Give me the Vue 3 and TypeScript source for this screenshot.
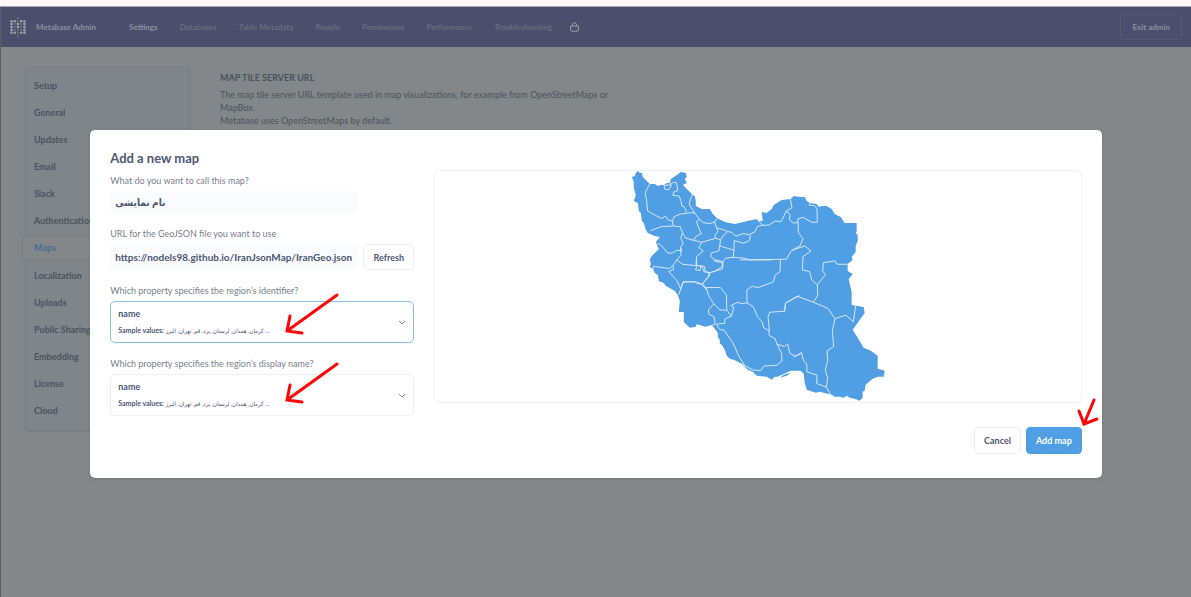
<script setup lang="ts">
import { ref } from 'vue'

const navItems: string[] = [
  'Settings', 'Databases', 'Table Metadata', 'People',
  'Permissions', 'Performance', 'Troubleshooting',
]

const sections: string[] = [
  'Setup', 'General', 'Updates', 'Email', 'Slack', 'Authentication', 'Maps',
  'Localization', 'Uploads', 'Public Sharing', 'Embedding', 'License', 'Cloud',
]

const mapName = ref('نام نمایشی')
const mapUrl = ref('https://nodels98.github.io/IranJsonMap/IranGeo.json')
const samples = 'کرمان, همدان, لرستان, یزد, قم, تهران, البرز ...'

// Logo: "1" is a bright dot, "0" a faint one, "." nothing
const logoRows: string[] = ['..0..', '11011', '10101', '10101', '10001', '11011', '..0..']
const logoDots = logoRows.flatMap((row, y) =>
  [...row].map((c, x) => ({ x: x * 10 + 4, y: y * 9 + 4, c })).filter((d) => d.c !== '.'),
)
</script>

<template>
  <div class="page">
    <div class="strip"></div>
    <header class="topbar">
      <svg class="logo" viewBox="0 0 48 62" aria-hidden="true">
        <circle v-for="(d, i) in logoDots" :key="i" :cx="d.x" :cy="d.y" r="4"
          :class="d.c === '1' ? 'dot-on' : 'dot-off'" />
      </svg>
      <strong class="brand">Metabase Admin</strong>
      <nav class="nav">
        <a v-for="(item, i) in navItems" :key="item" href="#" :class="{ current: i === 0 }">{{ item }}</a>
      </nav>
      <svg class="bag" viewBox="0 0 28 30" aria-hidden="true">
        <path d="M2 12H26V25Q26 28 23 28H5Q2 28 2 25ZM7 12V9Q8 2 14 2T21 9V12" />
      </svg>
      <button class="exit" type="button">Exit admin</button>
    </header>

    <div class="body">
      <aside class="sidebar">
        <a v-for="s in sections" :key="s" href="#" :class="{ active: s === 'Maps' }">{{ s }}</a>
      </aside>
      <main class="setting">
        <h1>MAP TILE SERVER URL</h1>
        <p>The map tile server URL template used in map visualizations, for example from OpenStreetMaps or MapBox.<br>Metabase uses OpenStreetMaps by default.</p>
      </main>
    </div>

    <div class="overlay">
      <section class="modal" role="dialog" aria-labelledby="modal-title">
        <div class="columns">
          <form class="form" @submit.prevent>
            <h2 id="modal-title">Add a new map</h2>
            <label for="map-name">What do you want to call this map?</label>
            <input id="map-name" v-model="mapName" class="text name" type="text">
            <label for="map-url">URL for the GeoJSON file you want to use</label>
            <div class="url-row">
              <input id="map-url" v-model="mapUrl" class="text" type="text">
              <button class="btn" type="button">Refresh</button>
            </div>
            <label for="region-key">Which property specifies the region’s identifier?</label>
            <div class="picker focused">
              <select id="region-key"><option>name</option></select>
              <span class="sample">Sample values: <span class="persian">{{ samples }}</span></span>
              <svg class="chevron" viewBox="0 0 8 5" aria-hidden="true"><path d="M1 1L4 4L7 1" /></svg>
              <svg class="arrow first" viewBox="0 0 56 42" aria-hidden="true"><path d="M53 2L3 38M6 23L3 38L18 40" /></svg>
            </div>
            <label for="region-name">Which property specifies the region’s display name?</label>
            <div class="picker">
              <select id="region-name"><option>name</option></select>
              <span class="sample">Sample values: <span class="persian">{{ samples }}</span></span>
              <svg class="chevron" viewBox="0 0 8 5" aria-hidden="true"><path d="M1 1L4 4L7 1" /></svg>
              <svg class="arrow second" viewBox="0 0 56 42" aria-hidden="true"><path d="M53 2L3 38M6 23L3 38L18 40" /></svg>
            </div>
          </form>

          <div class="preview">
            <svg class="map" viewBox="435 171 646 231" role="img" aria-label="Map preview">
              <path class="land" d="M632 177L635 176L636 173L638 171L640 173L642 173L643 177L647 181L650 184L655 184L658 186L661 185L664 185L667 183L670 183L671 179L677 175L681 172L686 173L687 177L685 179L687 183L683 185L686 188L689 191L693 195L695 196L696 201L696 206L702 209L710 209L713 214L717 218L725 222L735 224L748 221L757 219L759 221L763 221L762 212L767 213L772 209L774 205L782 200L791 199L794 196L800 197L805 197L807 201L810 203L817 204L819 207L822 206L827 206L832 209L835 214L841 217L845 223L857 223L857 231L856 233L858 235L858 241L856 246L856 252L852 257L853 260L848 264L848 271L853 274L849 279L852 292L852 305L864 307L865 313L853 330L858 338L864 348L871 351L878 356L878 369L885 371L884 377L878 377L873 379L866 385L865 391L863 392L863 398L860 401L855 399L850 398L847 396L844 398L840 397L835 397L832 395L820 392L816 393L807 390L805 383L804 374L801 371L791 371L782 375L778 377L775 377L772 380L767 377L757 376L753 372L748 370L742 364L734 360L730 359L727 356L725 350L722 345L720 344L720 340L718 337L718 333L712 325L705 327L700 325L696 324L695 321L698 320L696 327L690 328L684 322L684 312L679 312L680 301L678 295L675 291L670 288L666 286L664 283L659 281L658 275L655 273L653 269L650 267L651 264L650 259L652 256L655 253L659 249L656 242L660 237L655 236L648 233L646 230L644 223L642 221L641 213L639 211L638 203L634 201L636 195L634 188L634 182Z" />
              <path class="land" d="M780 378L784 375L791 373L787 376ZM784 375L789 372" />
              <g class="borders" transform="translate(620 160) scale(.333333)">
                <path d="M90 72L80 90L76 103L80 118L83 153L105 165L126 176L137 168L145 180L158 183L160 198L125 200L92 212M158 183L163 170L183 162L215 158L225 159M133 76L135 88L147 89L154 78L151 68M133 76L151 75L160 67L170 68L174 92L162 96L159 106L178 108L184 125L186 138L193 140L200 156M220 99L211 120L208 133L218 149L225 159L239 178M239 178L250 188L270 191L284 186L292 176M239 178L230 185L239 210L245 221L228 230L221 242M284 186L291 204L313 210L324 215L335 217L349 229L368 221L389 224L406 215L412 200L430 195M160 198L181 200L188 218L183 235L190 250L182 262L186 273L171 271L156 280L143 279L126 258L114 250M188 218L197 234L221 241L246 247L288 235L302 240L312 225L324 215M291 204L294 215L285 226L288 235M302 240L300 258L343 271L343 242L371 250L389 242L392 226M343 271L340 292L375 295L388 300L455 300M300 258L297 273L275 279L272 290L286 300L310 305L317 295L340 292M246 247L237 263L250 273L241 281L230 290L231 320L227 330L241 332L242 317L254 320L256 334L268 339L265 350L247 374L221 366L191 365L183 387M310 305L306 321L285 334L268 339M182 262L184 285L171 300L188 313L228 317M171 300L159 317L149 326L101 319L99 333M159 317L162 328L147 335L171 362L183 387M247 374L260 390" />
              </g>
              <g class="borders" transform="translate(740 180) scale(.333333)">
                <path d="M50 117L70 136L88 135L107 123L124 125L140 93L157 83L152 58M140 93L151 104L149 119L161 129L175 128L174 117L190 112L216 127L233 127L232 87L225 77L208 76L212 67M175 128L176 158L190 176L181 198L155 212L140 238L0 240M155 212L195 198L214 213L190 230L188 270L210 275L216 300L233 315L258 283L249 275L251 248L286 243L292 253L323 253M122 241L121 275L107 285L101 306L55 323L37 319L22 329" />
              </g>
              <g class="borders" transform="translate(670 260) scale(.333333)">
                <path d="M27 105L39 67L75 65L97 73L109 83L152 83L170 105L171 151L185 169L165 177L165 190L139 193M97 73L117 50L121 38L158 27L160 10L132 2M121 38L103 36L97 20L79 15L79 0M109 83L117 108L132 132L116 150L117 163L133 171L136 192L126 197M132 132L150 150L171 151M185 169L192 142L183 137L205 127L213 131L232 129L231 89M232 129L251 141L263 170L278 187L281 203L299 213L295 170L300 157L344 154L348 129L390 107M139 193L150 209L163 211L190 250L208 291L225 317L250 331L273 332L282 319L321 316L337 303L335 279L322 253L315 235L299 228L297 210M322 253L344 260L354 252L360 280L377 289L396 278M225 317L215 312" />
              </g>
              <g class="borders" transform="translate(770 280) scale(.333333)">
                <path d="M45 95L47 70L82 49L131 67L175 86L196 116L229 106L251 126L258 78M131 67L144 47L143 15M196 116L188 153L192 200L172 213L174 242L167 271L174 295L170 322L184 346M72 231L96 220L101 241L111 253L112 276L142 286L141 311L170 322" />
              </g>
            </svg>
          </div>
        </div>

        <footer class="actions">
          <button class="btn" type="button">Cancel</button>
          <button class="btn primary" type="button">Add map</button>
          <svg class="arrow third" viewBox="0 0 24 30" aria-hidden="true"><path d="M18 3L8 27M3 14L8 27L21 22" /></svg>
        </footer>
      </section>
    </div>
  </div>
</template>

<style>
body {
  background: #838789;
}
</style>

<style scoped>
.page {
  position: relative;
  box-sizing: border-box;
  min-height: 100vh;
  background: #838789;
  color: #4a525f;
  font-family: Lato, "DejaVu Sans Condensed", "DejaVu Sans", sans-serif;
  font-size: 9px;
}
.page::before {
  content: "";
  position: absolute;
  top: 7px;
  bottom: 0;
  left: 0;
  width: 1px;
  background: #5c5f64;
}
.page * {
  box-sizing: border-box;
}
a {
  color: inherit;
  text-decoration: none;
}
button, input, select {
  font: inherit;
  color: inherit;
}
.strip {
  height: 7px;
  background: #fff7f5;
  border-bottom: 1px solid #aaa5ac;
}
.topbar {
  display: flex;
  align-items: center;
  height: 40px;
  padding: 0 9px 0 10px;
  background: #4c4f6b;
  color: #8d90a0;
  font-size: 8px;
}
.logo {
  width: 16px;
  height: 20px;
}
.dot-on { fill: #a0a1a4; }
.dot-off { fill: #65687c; }
.brand {
  margin-left: 10px;
  white-space: nowrap;
}
.nav {
  display: flex;
  gap: 22px;
  margin-left: 33px;
  white-space: nowrap;
  font-weight: 700;
  color: #696c80;
}
.nav .current {
  color: #8d90a0;
}
.bag {
  width: 9px;
  height: 10px;
  margin-left: 18px;
  fill: none;
  stroke: #a0a1a4;
  stroke-width: 3;
}
.exit {
  height: 26px;
  margin-left: auto;
  padding: 0 11px;
  border: 1px solid #565974;
  border-radius: 4px;
  background: none;
  font-weight: 700;
}
.body {
  display: flex;
  align-items: flex-start;
  gap: 30px;
  padding: 20px 25px;
}
.sidebar {
  flex: 0 0 165px;
  display: flex;
  flex-direction: column;
  padding: 4px 0 6px;
  border: 1px solid #7c8085;
  border-radius: 4px;
  background: #808589;
  box-shadow: 0 1px 2px #767a7e;
  font-weight: 700;
}
.sidebar a {
  padding: 0 8px;
  line-height: 27px;
}
.sidebar .active {
  margin: 1px -4px;
  padding: 0 11px;
  border: 1px solid #787d82;
  border-radius: 4px;
  background: #83878a;
  line-height: 24px;
  color: #466f92;
}
.setting {
  max-width: 392px;
  padding-top: 4px;
}
.setting h1 {
  margin: 0 0 4px;
  font-size: 9px;
  line-height: 13px;
}
.setting p {
  margin: 0;
  line-height: 13px;
}
.overlay {
  position: absolute;
  inset: 0;
  display: flex;
  justify-content: center;
  align-items: flex-start;
  padding: 130px 0 0 1px;
}
.modal {
  width: 85%;
  padding: 20px 20px 24px;
  border-radius: 5px;
  background: #fff;
  box-shadow: 0 1px 3px #6f7376;
  color: #4c5773;
}
.columns {
  display: flex;
  align-items: flex-start;
  gap: 20px;
}
.form {
  flex: 0 0 304px;
  min-width: 0;
}
h2 {
  margin: 0 0 9px;
  font-size: 13px;
  line-height: 16px;
}
label {
  display: block;
  margin: 15px 0 4px;
  line-height: 12px;
  color: #777f8d;
}
h2 + label {
  margin-top: 0;
}
.text {
  display: block;
  width: 248px;
  height: 26px;
  padding: 0 5px;
  border: 0;
  border-radius: 4px;
  background: #f9fbfc;
  font-size: 10px;
  font-weight: 700;
}
.text.name {
  height: 22px;
}
.url-row {
  display: flex;
  gap: 5px;
}
.btn {
  height: 27px;
  padding: 0 9px;
  border: 1px solid #eeeff1;
  border-radius: 4px;
  background: #fff;
  font-weight: 700;
  white-space: nowrap;
}
.url-row .btn {
  flex: 1;
  height: 26px;
}
.btn.primary {
  border-color: #509ee3;
  background: #509ee3;
  color: #fff;
}
.picker {
  position: relative;
  display: grid;
  align-items: center;
  height: 42px;
}
.picker select, .sample, .chevron {
  grid-area: 1 / 1;
}
.picker select {
  width: 100%;
  height: 42px;
  padding: 0 8px 17px 7px;
  border: 1px solid #eeeff1;
  border-radius: 5px;
  background: #fff;
  appearance: none;
  font-weight: 700;
}
.picker.focused select {
  border-color: #8abcec;
}
.sample {
  padding: 16px 8px 0;
  font-size: 7px;
  font-weight: 700;
  line-height: 10px;
  pointer-events: none;
}
.persian {
  font-size: 6px;
  font-weight: 400;
}
.chevron {
  justify-self: end;
  width: 8px;
  height: 5px;
  margin-right: 8px;
  fill: none;
  stroke: #7f899b;
  pointer-events: none;
}
.arrow {
  position: absolute;
  fill: none;
  stroke: #ff0505;
  stroke-width: 3;
  stroke-linecap: round;
  pointer-events: none;
}
.arrow.first, .arrow.second {
  left: 174px;
  width: 56px;
  height: 42px;
}
.arrow.first { top: -8px; }
.arrow.second { top: -12px; }
.preview {
  flex: 1;
  min-width: 0;
  margin-top: 20px;
  border: 1px solid #f0f1f2;
  border-radius: 5px;
}
.map {
  display: block;
  width: 100%;
}
.land {
  fill: #509ee3;
}
.borders {
  fill: none;
  stroke: #d5e7f8;
  stroke-width: 3;
  stroke-linejoin: round;
}
.actions {
  position: relative;
  display: flex;
  justify-content: flex-end;
  gap: 5px;
  margin-top: 11px;
}
.arrow.third {
  top: -30px;
  right: -18px;
  width: 24px;
  height: 30px;
}
</style>
